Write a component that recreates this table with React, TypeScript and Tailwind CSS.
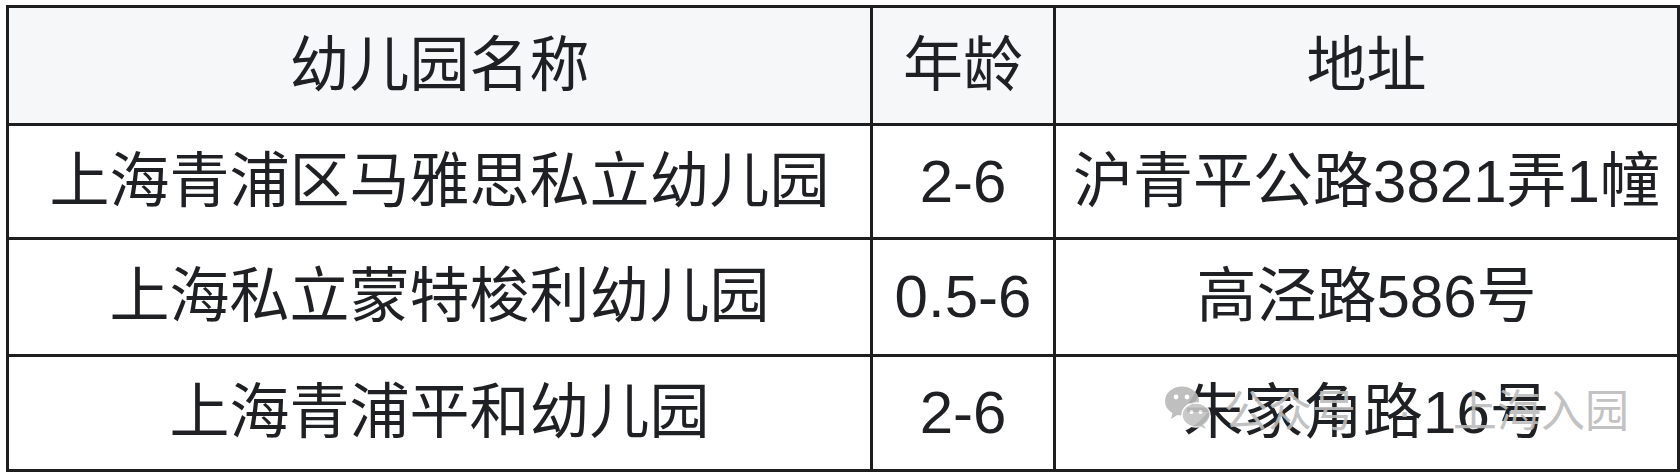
const rows = [
  { name: "上海青浦区马雅思私立幼儿园", age: "2-6", addr: "沪青平公路3821弄1幢", h: "h-[114px]" },
  { name: "上海私立蒙特梭利幼儿园", age: "0.5-6", addr: "高泾路586号", h: "h-[117px]" },
  { name: "上海青浦平和幼儿园", age: "2-6", addr: "朱家角路16号", h: "h-[115px]" },
];

function WeChatMark() {
  return (
    <svg width="48" height="46" viewBox="0 0 48 46" className="shrink-0">
      <ellipse cx="18" cy="17" rx="17" ry="14.5" fill="#b9b9b9" />
      <path d="M9 27 L7 35 L15 30 Z" fill="#b9b9b9" />
      <circle cx="12" cy="13" r="2.4" fill="#fff" />
      <circle cx="23" cy="13" r="2.4" fill="#fff" />
      <ellipse cx="32" cy="31" rx="14" ry="12" fill="#c4c4c4" stroke="#fff" strokeWidth="1.5" />
      <path d="M39 40 L42 45 L35 42 Z" fill="#c4c4c4" />
      <circle cx="27.5" cy="28" r="2" fill="#fff" />
      <circle cx="36.5" cy="28" r="2" fill="#fff" />
    </svg>
  );
}

export default function App() {
  const cell = "border-[3px] border-[#1e1e1e] text-center align-middle p-0";
  return (
    <div
      className="relative w-[1680px] h-[476px] bg-white pt-[5px] pl-[6px] text-[#1f2023]"
      style={{ fontFamily: '"Liberation Sans", "Noto Sans CJK SC", sans-serif' }}
    >
      <table className="table-fixed border-collapse w-[1671px] text-[60px] leading-none">
        <colgroup>
          <col className="w-[864px]" />
          <col className="w-[183px]" />
          <col className="w-[624px]" />
        </colgroup>
        <thead>
          <tr className="h-[118px] bg-[#f6f7f9]">
            <th className={`${cell} font-normal`}>幼儿园名称</th>
            <th className={`${cell} font-normal`}>年龄</th>
            <th className={`${cell} font-normal`}>地址</th>
          </tr>
        </thead>
        <tbody>
          {rows.map((r) => (
            <tr key={r.name} className={r.h}>
              <td className={cell}>{r.name}</td>
              <td className={cell}>{r.age}</td>
              <td className={cell}>{r.addr}</td>
            </tr>
          ))}
        </tbody>
      </table>

      {/* watermark */}
      <div className="absolute left-[1164px] top-[384px] flex items-start text-[44px] leading-none text-[#bcbcbc] opacity-90 pointer-events-none">
        <WeChatMark />
        <span className="ml-[12px] mt-[6px]">公众号</span>
        <span className="mt-[6px] w-[97px] text-center">·</span>
        <span className="mt-[6px]">上海入园</span>
      </div>
    </div>
  );
}
